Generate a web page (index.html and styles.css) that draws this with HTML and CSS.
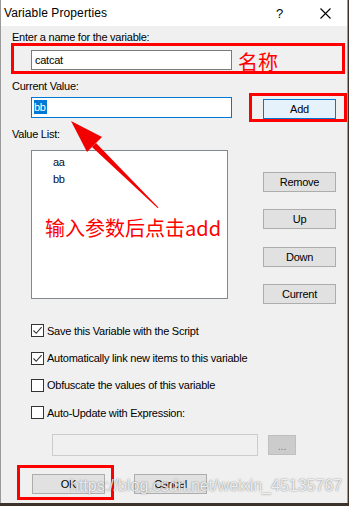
FILE: index.html
```html
<!DOCTYPE html>
<html lang="en">
<head>
    <meta charset="UTF-8">
    <meta name="viewport" content="width=device-width, initial-scale=1.0">
    <title>Variable Properties</title>
    <link rel="stylesheet" href="styles.css">
</head>
<body>
    <div class="window">
        <div class="titlebar">
            <span class="title">Variable Properties</span>
            <span class="help">?</span>
            <svg class="close" width="11" height="11" viewBox="0 0 11 11">
                <path d="M0.5 0.5 L10.5 10.5 M10.5 0.5 L0.5 10.5" stroke="#000" stroke-width="1.1" fill="none"/>
            </svg>
        </div>

        <div class="content">
            <div class="label">Enter a name for the variable:</div>
            <div class="name-box">
                <div class="field">catcat</div>
                <span class="note">名称</span>
            </div>

            <div class="row value-row">
                <div class="col-left">
                    <div class="label">Current Value:</div>
                    <div class="field focused"><span class="selected">bb</span></div>
                </div>
                <div class="col-right">
                    <button class="btn btn-add">Add<span class="mark mark-add"></span></button>
                </div>
            </div>

            <div class="row list-row">
                <div class="col-left">
                    <div class="label">Value List:</div>
                    <ul class="value-list">
                        <li>aa</li>
                        <li>bb</li>
                    </ul>
                </div>
                <div class="col-right side-buttons">
                    <button class="btn">Remove</button>
                    <button class="btn">Up</button>
                    <button class="btn">Down</button>
                    <button class="btn">Current</button>
                </div>
            </div>

            <div class="checks">
                <div class="check-row"><span class="box checked"><svg width="11" height="11" viewBox="0 0 11 11"><path d="M1.5 5.5 L4.2 8.3 L9.6 2.2" stroke="#333" stroke-width="1.1" fill="none"/></svg></span>Save this Variable with the Script</div>
                <div class="check-row"><span class="box checked"><svg width="11" height="11" viewBox="0 0 11 11"><path d="M1.5 5.5 L4.2 8.3 L9.6 2.2" stroke="#333" stroke-width="1.1" fill="none"/></svg></span>Automatically link new items to this variable</div>
                <div class="check-row"><span class="box"></span>Obfuscate the values of this variable</div>
                <div class="check-row"><span class="box"></span>Auto-Update with Expression:</div>
            </div>

            <div class="expr-row">
                <div class="field disabled"></div>
                <button class="btn btn-dots" disabled>...</button>
            </div>

            <div class="footer">
                <button class="btn">OK<span class="mark mark-ok"></span></button>
                <button class="btn">Cancel</button>
            </div>
        </div>

        <svg class="arrow" width="349" height="506" viewBox="0 0 349 506">
            <polygon points="158.5,207.5 157.5,208 92,147 96,143" fill="#f20000"/>
            <polygon points="71,121 102,137 87,152" fill="#f20000"/>
        </svg>
        <div class="annotation">输入参数后点击add</div>
        <div class="watermark">https://blog.csdn.net/weixin_45135767</div>
    </div>
</body>
</html>
```

FILE: styles.css
```css
body {
    margin: 0;
    background-color: #3d3229;
    font-family: "Liberation Sans", Arial, sans-serif;
    font-size: 11px;
    letter-spacing: -0.25px;
    color: #000;
}
.window {
    position: relative;
    width: 348px;
    height: 503px;
    box-sizing: border-box;
    background-color: #f0f0f0;
    border-left: 1px solid #9a9a9a;
    border-right: 1px solid #9a9a9a;
    overflow: hidden;
}
.titlebar {
    height: 26px;
    background-color: #fff;
    display: flex;
    align-items: center;
    padding-left: 3px;
}
.title {
    font-size: 12px;
    letter-spacing: 0.1px;
}
.help {
    margin-left: auto;
    font-size: 13px;
}
.close {
    margin-left: 37px;
    margin-right: 16px;
}
.content {
    padding-top: 5px;
}
.label {
    height: 12px;
    line-height: 12px;
    margin-left: 11px;
    white-space: nowrap;
}
.field {
    box-sizing: border-box;
    width: 201px;
    height: 20px;
    background-color: #fff;
    border: 1px solid #7a7a7a;
    padding: 3px 0 0 3px;
    line-height: 13px;
}
.field.focused {
    height: 21px;
    border-color: #0078d7;
    padding: 2px 0 0 2px;
}
.selected {
    display: inline-block;
    background-color: #0078d7;
    color: #fff;
    height: 14px;
    line-height: 14px;
    padding-right: 1px;
}
.field.disabled {
    width: 206px;
    height: 22px;
    background-color: #f0f0f0;
    border-color: #cccccc;
}
.name-box {
    display: flex;
    align-items: flex-start;
    gap: 6px;
    margin-left: 10px;
    width: 334px;
    height: 31px;
    box-sizing: border-box;
    border: 3px solid #f00;
    padding: 4px 0 0 17px;
}
.note {
    margin-top: 2px;
    font-family: "Noto Sans CJK SC", sans-serif;
    font-size: 20px;
    line-height: 20px;
    letter-spacing: 0;
    color: #f00;
}
.row {
    display: flex;
}
.col-left {
    width: 262px;
}
.col-left .label {
    margin-left: 11px;
}
.col-left .field,
.col-left .value-list {
    margin-left: 30px;
}
.value-row {
    margin-top: 6px;
}
.value-row .field {
    margin-top: 5px;
}
.btn {
    position: relative;
    box-sizing: border-box;
    width: 73px;
    height: 20px;
    padding: 0;
    background-color: #e1e1e1;
    border: 1px solid #adadad;
    border-radius: 0;
    font-family: inherit;
    font-size: 11px;
    letter-spacing: -0.25px;
    color: #000;
}
.btn-add {
    margin-top: 19px;
    background-color: #e5f1fb;
    border-color: #0078d7;
}
.mark {
    position: absolute;
    border: 3px solid #f00;
}
.mark-add {
    top: -7px;
    right: -12px;
    bottom: -4px;
    left: -15px;
}
.mark-ok {
    top: -10px;
    right: -10px;
    bottom: -7px;
    left: -16px;
}
.list-row {
    margin-top: 9px;
}
.value-list {
    list-style: none;
    box-sizing: border-box;
    width: 197px;
    height: 149px;
    margin: 10px 0 0 30px;
    padding: 4px 0 0 21px;
    background-color: #fff;
    border: 1px solid #828790;
    color: #0a0a1e;
}
.value-list li {
    height: 17px;
    line-height: 14px;
}
.side-buttons {
    display: flex;
    flex-direction: column;
    gap: 17.4px;
    padding-top: 44px;
}
.checks {
    display: flex;
    flex-direction: column;
    gap: 14.4px;
    margin: 20px 0 0 30px;
}
.check-row {
    display: flex;
    align-items: center;
    height: 13px;
    gap: 3px;
    white-space: nowrap;
}
.box {
    box-sizing: border-box;
    width: 13px;
    height: 13px;
    border: 1px solid #333;
    background-color: #fff;
    display: flex;
    align-items: center;
    justify-content: center;
}
.expr-row {
    display: flex;
    align-items: flex-start;
    gap: 10px;
    margin: 15px 0 0 51px;
}
.btn-dots {
    width: 28px;
    margin-top: 1px;
    background-color: #cccccc;
    border-color: #bfbfbf;
    color: #838383;
    line-height: 20px;
}
.footer {
    display: flex;
    gap: 29px;
    margin: 18px 0 0 31px;
}
.arrow {
    position: absolute;
    top: 0;
    left: -1px;
    pointer-events: none;
}
.annotation {
    position: absolute;
    top: 217px;
    left: 44px;
    font-family: "Noto Sans CJK SC", sans-serif;
    font-size: 20px;
    line-height: 22px;
    letter-spacing: 0;
    color: #f00;
    white-space: nowrap;
}
.watermark {
    position: absolute;
    top: 477px;
    left: 69px;
    font-size: 16px;
    letter-spacing: 0;
    color: rgba(255, 255, 255, 0.85);
    text-shadow: 0 0 1.5px rgba(60, 60, 60, 0.75);
    white-space: nowrap;
    pointer-events: none;
}
```
